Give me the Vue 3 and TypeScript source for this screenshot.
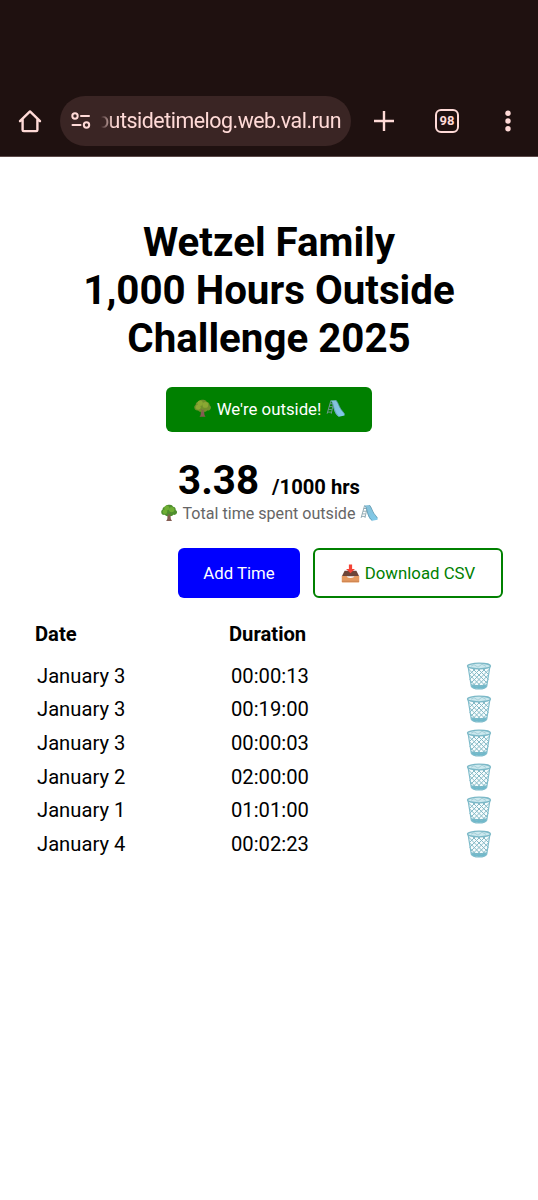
<script setup lang="ts">
interface Entry {
  date: string
  duration: string
}

const entries: Entry[] = [
  { date: 'January 3', duration: '00:00:13' },
  { date: 'January 3', duration: '00:19:00' },
  { date: 'January 3', duration: '00:00:03' },
  { date: 'January 2', duration: '02:00:00' },
  { date: 'January 1', duration: '01:01:00' },
  { date: 'January 4', duration: '00:02:23' },
]
</script>

<template>
  <div class="screen">
    <svg class="defs" aria-hidden="true">
      <defs>
        <linearGradient id="slide-fill" x1="0" y1="0" x2="1" y2="1">
          <stop offset="0" stop-color="#86bfd6" />
          <stop offset="1" stop-color="#7fcbec" />
        </linearGradient>
        <symbol id="tree" viewBox="0 0 20 20">
          <path d="M8.200 11h3.600l.1 4.600c.1 1.400.7 2.300 1.500 3.200H6.800c.9-1 1.400-1.900 1.400-3.200z" fill="#855c52" />
          <path class="leaf-dark" d="M10 .9c2.200-.5 4 .6 4.500 2.200 2 .2 3.300 1.800 2.900 3.500 1.700.9 2 3 .9 4.300-.8 1.200-2.300 1.500-3.500 1.100-.9 1.500-3 1.900-4.600.8-1.700 1.200-3.900.8-4.800-.8C3.500 12.400 1.600 11.400 1.500 9.600c-.5-1.500.2-2.700 1.300-3.300C2.700 4.400 4 3 5.700 3 6.500 1.500 8.300.5 10 .9z" fill="var(--leaf-dark)" />
          <g fill="var(--leaf)">
            <circle cx="7.500" cy="4.500" r="2.800" />
            <circle cx="13" cy="6.200" r="3" />
            <circle cx="5.500" cy="8.600" r="2.600" />
          </g>
          <path d="M8.700 10.800l1.300 2 1.800-1.600M9.900 12v3" fill="none" stroke="#855c52" stroke-width="1" />
        </symbol>
        <symbol id="slide" viewBox="0 0 20 20">
          <path d="M5 2L1.200 15.500M8 4L5.500 15.500M4.200 5h3.200M3.400 8h3.400M2.600 11h3.500M1.800 13.800h3.800M11.500 4v4" fill="none" stroke="#7d9ba5" stroke-width=".9" />
          <path d="M5 1.600l5.500-.4c2.300 2.600 3 6.300 5.200 9.600 1.300 2 3 3.200 3.800 5v1.600l-6 1.200c-2.700-1.200-3.900-3.900-4.900-6.800C7.500 8.100 7.400 4.200 5 1.600z" fill="url(#slide-fill)" />
          <path d="M5 1.600c2.700 2.600 2.600 6.200 3.900 9.600 1.100 3 2.400 5.400 4.600 7.200M10.500 1.200c2.400 2.600 3 6.300 5.200 9.600 1.300 2 3 3.200 3.800 5" fill="none" stroke="#5b93a8" stroke-width=".8" />
        </symbol>
        <symbol id="inbox" viewBox="0 0 20 20">
          <path d="M3.800 7h12.400l2.900 6H.9z" fill="#6d4538" />
          <path d="M.8 12.700h5.100c.5 1.800 1.700 2 4.100 2s3.600-.2 4.100-2h5.100v6.100c0 .5-.3.700-.8.700H1.600c-.5 0-.8-.2-.8-.7z" fill="#e59a60" />
          <path d="M1 18.200h18" stroke="#c57a49" stroke-width=".8" />
          <path d="M8.300.6h3.400v4.600h3L10 9.700 5.300 5.200h3z" fill="#f44336" />
        </symbol>
        <symbol id="basket" viewBox="0 0 26 28">
          <path d="M2 4l3.300 20.300c.7 1.700 3.400 2.700 7.700 2.700s7-1 7.700-2.700L24 4z" fill="#f6fcfd" />
          <path d="M5 22c3 1.300 13 1.300 16 0l-.5 2.500c-1 3.200-14 3.200-15 0z" fill="#6fb9cb" />
          <path d="M2.500 7l17 17M3.700 13l12 12M4.700 19l6 6M6 6l15 15M11 6l11.500 11.500M16 6l7 7M23.500 7l-17 17M22.300 13l-12 12M21.300 19l-6 6M20 6L5 21M15 6L3.500 17.500M10 6L3 13" fill="none" stroke="#86bac6" stroke-width="1" />
          <path d="M2 4l3.300 20.300c.7 1.700 3.400 2.700 7.700 2.700s7-1 7.700-2.700L24 4" fill="none" stroke="#7fbccb" stroke-width="1.200" />
          <ellipse cx="13" cy="4" rx="11.500" ry="2.800" fill="#cbe8ee" stroke="#7bb8c7" stroke-width="1.300" />
          <path d="M5 4.200l3-1.500 4 2.500 4-3 4 2.200" fill="none" stroke="#94c3cd" stroke-width=".7" />
        </symbol>
      </defs>
    </svg>

    <header class="browser">
      <svg class="home" viewBox="0 0 26 26"><path d="M3 13.200L13 3.400l10 9.800M5.600 11.400v10.500q0 1.200 1.200 1.200h12.400q1.200 0 1.200-1.200V11.400" /></svg>
      <div class="address">
        <svg class="tune" viewBox="0 0 20 18"><circle cx="4" cy="4" r="2.700" /><path d="M10 4h8M1.500 13h8" /><circle cx="15.500" cy="13" r="2.700" /></svg>
        <div class="url"><span>outsidetimelog.web.val.run</span></div>
      </div>
      <svg class="plus" viewBox="0 0 22 22"><path d="M11 1v20M1 11h20" /></svg>
      <div class="tabs">98</div>
      <svg class="more" viewBox="0 0 6 22"><circle cx="3" cy="3.200" r="2.700" /><circle cx="3" cy="11" r="2.700" /><circle cx="3" cy="18.800" r="2.700" /></svg>
    </header>

    <main>
      <h1>Wetzel Family<br />1,000 Hours Outside<br />Challenge 2025</h1>
      <button class="outside"><svg class="emoji"><use href="#tree" /></svg><span>We're outside!</span><svg class="emoji"><use href="#slide" /></svg></button>
      <div class="total"><strong>3.38</strong><b>/1000 hrs</b></div>
      <div class="caption"><svg class="emoji"><use href="#tree" /></svg><span>Total time spent outside</span><svg class="emoji"><use href="#slide" /></svg></div>
      <div class="actions">
        <button class="add">Add Time</button>
        <button class="download"><svg class="emoji"><use href="#inbox" /></svg><span>Download CSV</span></button>
      </div>
      <div class="head"><span>Date</span><span>Duration</span></div>
      <div v-for="(entry, i) in entries" :key="i" class="row">
        <span>{{ entry.date }}</span>
        <span>{{ entry.duration }}</span>
        <svg class="trash"><use href="#basket" /></svg>
      </div>
    </main>
  </div>
</template>

<style>
body { background: #fff; }
</style>

<style scoped>
.screen { --leaf: #6fae35; --leaf-dark: #4f8f2e; width: 538px; height: 1200px; overflow: hidden; background: #fff; color: #000; font-family: Roboto, sans-serif; }
.defs { display: block; width: 0; height: 0; }
.browser { box-sizing: border-box; display: flex; align-items: center; height: 157px; padding: 85px 0 0 17px; background: #1f1110; border-bottom: 1px solid #5c4a49; }
.home { width: 26px; height: 26px; fill: none; stroke: #ffdad7; stroke-width: 2.400; stroke-linejoin: round; stroke-linecap: round; }
.address { box-sizing: border-box; display: flex; align-items: center; width: 291px; height: 50px; margin-left: 17px; padding-left: 11px; border-radius: 25px; background: #3a2524; }
.tune { width: 20px; height: 18px; fill: none; stroke: #ffdad7; stroke-width: 2; stroke-linecap: round; }
.url { display: flex; justify-content: flex-end; width: 240px; margin-left: 10px; color: #ffdad7; font-size: 21.400px; letter-spacing: -.48px; line-height: 30px; white-space: nowrap; mask-image: linear-gradient(to right, transparent 0, #000 12px); }
.plus { width: 22px; height: 22px; margin-left: 22px; fill: none; stroke: #ffdad7; stroke-width: 2.400; }
.tabs { box-sizing: border-box; display: flex; align-items: center; justify-content: center; width: 24px; height: 24px; margin-left: 40px; border: 2px solid #ffdad7; border-radius: 6px; color: #ffdad7; font-size: 13px; font-weight: 700; line-height: 18px; }
.more { width: 6px; height: 22px; margin-left: 46px; fill: #ffdad7; }
main { display: flex; flex-direction: column; padding: 62px 35px 0; }
h1 { margin: 0; font-size: 40.300px; font-weight: 700; line-height: 48px; text-align: center; white-space: nowrap; }
button { box-sizing: border-box; display: flex; align-items: center; justify-content: center; margin: 0; padding: 0; border: 0; border-radius: 6px; font-family: inherit; font-size: 16.800px; color: #fff; white-space: nowrap; }
.emoji { flex: none; width: 19px; height: 19px; }
.outside { --leaf: #8aa833; --leaf-dark: #71902c; align-self: center; gap: 5px; width: 206px; height: 45px; padding-bottom: 2px; margin-top: 24px; background: #008000; }
.total { display: flex; align-items: baseline; justify-content: center; gap: 13px; height: 48px; margin-top: 25px; line-height: 48px; }
.total strong { font-size: 40.300px; }
.total b { font-size: 20.200px; }
.caption { display: flex; align-items: center; justify-content: center; gap: 5px; height: 22px; margin-top: -3px; color: #666; font-size: 16.100px; white-space: nowrap; }
.caption .emoji { width: 18px; height: 18px; }
.actions { display: flex; justify-content: flex-end; gap: 13px; margin-top: 24px; }
.add { width: 122px; height: 50px; background: #00f; }
.download { gap: 5px; width: 190px; height: 50px; border: 2px solid #008000; background: #fff; color: #008000; }
.head, .row { display: grid; grid-template-columns: 194px 1fr 26px; align-items: center; font-size: 20.200px; }
.head { height: 38px; margin-top: 17px; margin-bottom: 6px; font-weight: 700; }
.row { height: 33.600px; padding: 0 11px 0 2px; }
.trash { width: 26px; height: 28px; }
</style>
